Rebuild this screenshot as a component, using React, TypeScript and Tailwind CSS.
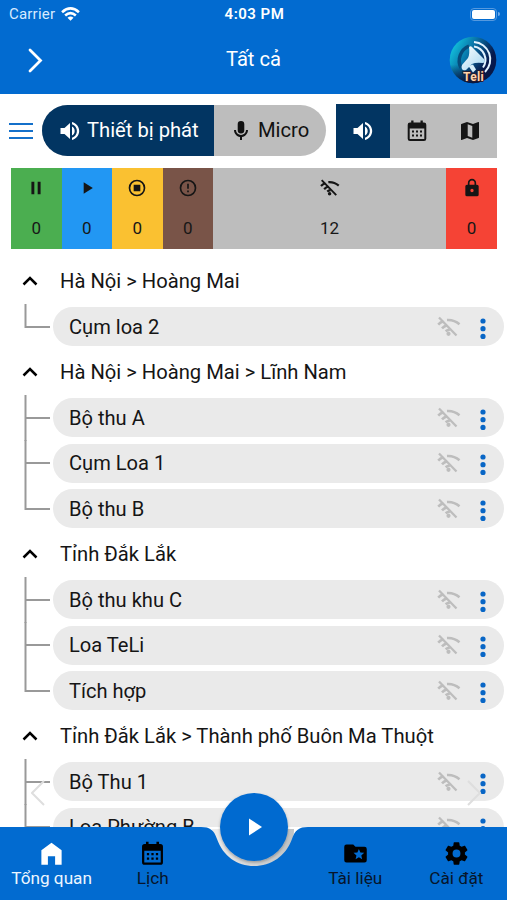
import type { ReactNode } from 'react'

type IconName = keyof typeof paths

const paths = {
  volume:
    'M2.5 9v6h4l5.5 5V4L6.5 9zm14.2 3c0-2-1.1-3.7-2.7-4.5v9c1.6-.8 2.7-2.5 2.7-4.5zM14 3v2.3c2.9.9 4.9 3.6 4.9 6.7s-2 5.8-4.9 6.7V21c4.1-1 7.2-4.6 7.2-9S18.1 4 14 3z',
  mic: 'M12 2a3.3 3.3 0 0 1 3.3 3.3v6a3.3 3.3 0 0 1-6.6 0v-6A3.3 3.3 0 0 1 12 2m7 9c0 3.53-2.61 6.44-6 6.93V21h-2v-3.07c-3.39-.49-6-3.4-6-6.93h2a5 5 0 0 0 10 0h2z',
  calendar:
    'M5 3.5h1.2v-2h2.3v2h7v-2h2.3v2H19a2.3 2.3 0 0 1 2.3 2.3v13.9A2.3 2.3 0 0 1 19 22H5a2.3 2.3 0 0 1-2.3-2.3V5.8A2.3 2.3 0 0 1 5 3.5M4.7 9.5V20h14.6V9.5zM7 11.5h2v2H7zm4 0h2v2h-2zm4 0h2v2h-2zm-8 4h2v2H7zm4 0h2v2h-2zm4 0h2v2h-2z',
  map: 'M20.5 3l-.16.03L15 5.1 9 3 3.36 4.9c-.21.07-.36.25-.36.48V20.5a.5.5 0 0 0 .5.5l.16-.03L9 18.9l6 2.1 5.64-1.9c.21-.07.36-.25.36-.48V3.5a.5.5 0 0 0-.5-.5zM14.3 18.7l-4.6-1.6V5.3l4.6 1.6z',
  pause: 'M6.5 4.5H10v15H6.5zM14 4.5h3.5v15H14z',
  play: 'M8 5v14l11-7z',
  stop: 'M12 2a10 10 0 1 0 0 20 10 10 0 0 0 0-20zm0 2a8 8 0 1 1 0 16 8 8 0 0 1 0-16zM8 8v8h8V8z',
  alert:
    'M11 15h2v2h-2zm0-8h2v6h-2zm1-5a10 10 0 1 0 0 20 10 10 0 0 0 0-20zm0 18a8 8 0 1 1 0-16 8 8 0 0 1 0 16z',
  lock: 'M12 17a2 2 0 0 0 0-4 2 2 0 0 0 0 4m6-9a2 2 0 0 1 2 2v10a2 2 0 0 1-2 2H6a2 2 0 0 1-2-2V10a2 2 0 0 1 2-2h1V6a5 5 0 0 1 10 0v2h1m-6-5a3 3 0 0 0-3 3v2h6V6a3 3 0 0 0-3-3z',
  home: 'M12 2.5 3 9v13h5.8v-7.5h6.4V22H21V9z',
  folder:
    'M20 6h-8l-2-2H4a2 2 0 0 0-2 2v12a2 2 0 0 0 2 2h16a2 2 0 0 0 2-2V8a2 2 0 0 0-2-2zm-2.06 11L15 15.28 12.06 17l.78-3.33-2.59-2.24 3.41-.29L15 8l1.34 3.14 3.41.29-2.59 2.24.78 3.33z',
  cog: 'M12 15.5A3.5 3.5 0 0 1 8.5 12 3.5 3.5 0 0 1 12 8.5a3.5 3.5 0 0 1 3.5 3.5 3.5 3.5 0 0 1-3.5 3.5m7.43-2.53c.04-.32.07-.64.07-.97s-.03-.66-.07-1l2.11-1.63c.19-.15.24-.42.12-.64l-2-3.46c-.12-.22-.39-.31-.61-.22l-2.49 1c-.52-.39-1.06-.73-1.69-.98l-.37-2.65A.506.506 0 0 0 14 2h-4c-.25 0-.46.18-.5.42l-.37 2.65c-.63.25-1.17.59-1.69.98l-2.49-1c-.22-.09-.49 0-.61.22l-2 3.46c-.13.22-.07.49.12.64L4.57 11c-.04.34-.07.67-.07 1s.03.65.07.97l-2.11 1.66c-.19.15-.25.42-.12.64l2 3.46c.12.22.39.3.61.22l2.49-1.01c.52.4 1.06.74 1.69.99l.37 2.65c.04.24.25.42.5.42h4c.25 0 .46-.18.5-.42l.37-2.65c.63-.26 1.17-.59 1.69-.99l2.49 1.01c.22.08.49 0 .61-.22l2-3.46c.12-.22.07-.49-.12-.64z',
}

function Icon({ name, className }: { name: IconName; className: string }) {
  return (
    <svg viewBox="0 0 24 24" fill="currentColor" className={className}>
      <path d={paths[name]} fillRule="evenodd" />
    </svg>
  )
}

function WifiOff({ className }: { className: string }) {
  return (
    <svg viewBox="0 0 24 24" fill="none" stroke="currentColor" strokeWidth="2.3" className={className}>
      <path d="M2 2.5l17.5 18" />
      <path d="M1.2 9.6Q3.2 7.4 6.4 6.2M10 5q7-.5 12.5 4.2M5 13.4q1.8-2 5-3.2M8.6 16.2q1.7-1.3 4.2-1.6" strokeWidth="2.6" />
      <circle cx="11.5" cy="18.8" r="2.1" fill="currentColor" stroke="none" />
    </svg>
  )
}

function Logo() {
  return (
    <svg viewBox="0 0 48 48" className="size-12">
      <defs>
        <linearGradient id="disc" x1="0" y1="0.15" x2="1" y2="0.7">
          <stop offset="0" stopColor="#14d0e6" />
          <stop offset="0.4" stopColor="#0873a8" />
          <stop offset="0.8" stopColor="#07184c" />
        </linearGradient>
        <linearGradient id="base" x1="0" y1="0" x2="0" y2="1">
          <stop offset="0.6" stopColor="#08163d" stopOpacity="0" />
          <stop offset="1" stopColor="#08163d" />
        </linearGradient>
        <linearGradient id="horn" x1="0" y1="0" x2="1" y2="1">
          <stop offset="0" stopColor="#fff" />
          <stop offset="1" stopColor="#9ed4f0" />
        </linearGradient>
      </defs>
      <circle cx="24" cy="24" r="23.3" fill="url(#disc)" />
      <circle cx="24" cy="24" r="23.3" fill="url(#base)" />
      <path d="M12 32a16 16 0 0 1 8-22" fill="none" stroke="#064c7c" strokeWidth="3.5" />
      <path d="M25 6a17.5 17.5 0 0 1 11 30M25 10.5a13.5 13.5 0 0 1 9 21" fill="none" stroke="#e3f3ff" strokeWidth="2" />
      <path d="M20 11q2-2 4 1l11 11q2 3-1 4-7-1-11 1l-6 6q-3 1-4-1t0-4l6-7q2-4 1-11z" fill="url(#horn)" />
      <path d="m19.5 30 4.5-1.5 3 5-3 3z" fill="#d6edf8" />
      <text x="24.5" y="45" textAnchor="middle" fontFamily="Roboto, sans-serif" fontSize="12" fontWeight="700" letterSpacing=".3" fill="#ffd4ab" stroke="#311a27" strokeWidth="1.4" paintOrder="stroke">Teli</text>
    </svg>
  )
}

function Header() {
  return (
    <header className="h-[93.5px] shrink-0 bg-[#026bd0] text-white">
      <div className="grid h-7 grid-cols-3 items-center pl-[9px] pr-[7px] text-[15px]">
        <div className="flex items-center gap-1.5 text-[#d7eaff]">
          <span className="tracking-[.2px]">Carrier</span>
          <svg viewBox="0 0 20 16" className="h-[15px] w-[19px]" fill="none" stroke="white" strokeWidth="2.8">
            <path d="M1 5.5q9-8 18 0M4.3 9q5.7-5 11.4 0" />
            <path d="m6.8 11.5 3.2 3.2 3.2-3.2q-3.2-2.5-6.4 0z" fill="white" stroke="none" />
          </svg>
        </div>
        <span className="text-center font-semibold tracking-[.5px]">4:03 PM</span>
        <div className="flex items-center justify-end gap-px">
          <div className="h-[13px] w-[27px] rounded-[4px] border border-[#5599df] p-px"><div className="h-full rounded-[2px] bg-white" /></div>
          <div className="h-1 w-0.5 rounded-r bg-[#71aceb]" />
        </div>
      </div>
      <div className="grid h-16 grid-cols-[1fr_auto_1fr] items-center px-[10px]">
        <svg viewBox="0 0 15 25" className="ml-[18px] h-[25px] w-[15px]" fill="none" stroke="white" strokeWidth="2.8" strokeLinecap="round"><path d="m2 2 10.5 10.5L2 23" /></svg>
        <h1 className="pb-px text-center text-[20.2px]">Tất cả</h1>
        <div className="flex justify-end"><Logo /></div>
      </div>
    </header>
  )
}

function Toolbar() {
  return (
    <div className="flex h-[54px] items-center pl-[9px] pr-[10px]">
      <div className="flex w-6 flex-col gap-[5px]">
        <span className="h-[2px] bg-[#1470ca]" />
        <span className="h-[2px] bg-[#1470ca]" />
        <span className="h-[2px] bg-[#1470ca]" />
      </div>
      <div className="ml-[9px] flex h-[51px] w-[284px] overflow-hidden rounded-full bg-[#bdbdbd] text-[20.2px]">
        <button className="flex w-[172px] items-center gap-[5px] whitespace-nowrap bg-[#023562] pl-4 text-white"><Icon name="volume" className="size-6" />Thiết bị phát</button>
        <button className="flex flex-1 items-center gap-[5px] pl-[15px] text-[#111]"><Icon name="mic" className="size-6" />Micro</button>
      </div>
      <div className="ml-auto flex h-[54px] w-[161px] bg-[#bdbdbd]">
        <button className="flex w-[54px] items-center justify-center bg-[#023562] text-white"><Icon name="volume" className="size-6" /></button>
        <button className="flex flex-1 items-center justify-center"><Icon name="calendar" className="size-6" /></button>
        <button className="flex flex-1 items-center justify-center"><Icon name="map" className="size-6" /></button>
      </div>
    </div>
  )
}

function Stat({ icon, count, color }: { icon: ReactNode; count: number; color: string }) {
  return (
    <div className={`flex flex-col items-center pt-[10.5px] ${color}`}>
      {icon}
      <span className="mt-[19.5px] text-[17px] leading-[20px] text-[#171717]">{count}</span>
    </div>
  )
}

function Stats() {
  return (
    <div className="ml-[11px] mr-[10px] mt-[10px] grid h-[81px] shrink-0 grid-cols-[50.5px_50.5px_50.5px_50.5px_1fr_51px]">
      <Stat color="bg-[#4bae50]" count={0} icon={<Icon name="pause" className="size-5" />} />
      <Stat color="bg-[#2297f3]" count={0} icon={<Icon name="play" className="size-5" />} />
      <Stat color="bg-[#fac131]" count={0} icon={<Icon name="stop" className="size-5" />} />
      <Stat color="bg-[#795448]" count={0} icon={<Icon name="alert" className="size-5" />} />
      <Stat color="bg-[#bdbdbd]" count={12} icon={<WifiOff className="size-5" />} />
      <Stat color="bg-[#f54335]" count={0} icon={<Icon name="lock" className="size-5" />} />
    </div>
  )
}

const groups = [
  { name: 'Hà Nội > Hoàng Mai', items: ['Cụm loa 2'] },
  { name: 'Hà Nội > Hoàng Mai > Lĩnh Nam', items: ['Bộ thu A', 'Cụm Loa 1', 'Bộ thu B'] },
  { name: 'Tỉnh Đắk Lắk', items: ['Bộ thu khu C', 'Loa TeLi', 'Tích hợp'] },
  { name: 'Tỉnh Đắk Lắk > Thành phố Buôn Ma Thuột', items: ['Bộ Thu 1', 'Loa Phường B', ''] },
]

function Device({ name, last }: { name: string; last: boolean }) {
  return (
    <div className="flex h-[45.5px] pl-6 pr-[3px]">
      <svg viewBox="0 0 29 45.5" className="h-[45.5px] w-[29px] shrink-0 overflow-visible" fill="none" stroke="#999" strokeWidth="2">
        <path d={last ? 'M1.5 0v23H26' : 'M1.5 0v46M1.5 23H26'} />
      </svg>
      <div className="mt-[3.8px] flex h-[39px] min-w-0 flex-1 items-center rounded-full bg-[#eaeaea] pl-4 pr-[18px] text-[20.1px]">
        <span className="flex-1">{name}</span>
        <WifiOff className="size-6 text-[#bdbdbd]" />
        <svg viewBox="0 0 6 22" className="ml-[19px] mt-1 h-[22px] w-[6px] fill-[#0866c6]">
          <circle cx="3" cy="3" r="2.6" /><circle cx="3" cy="10.7" r="2.6" /><circle cx="3" cy="18.4" r="2.6" />
        </svg>
      </div>
    </div>
  )
}

function DeviceList() {
  return (
    <main className="mt-[9.5px] min-h-0 flex-1 overflow-hidden">
      {groups.map((group) => (
        <section key={group.name}>
          <h2 className="flex h-[45.5px] items-center pl-[22px] text-[20.2px]">
            <svg viewBox="0 0 16 10" className="mr-[22px] h-[10px] w-4" fill="none" stroke="black" strokeWidth="2.5"><path d="m1.5 8.5 6.5-6.5 6.5 6.5" /></svg>
            {group.name}
          </h2>
          {group.items.map((item, i) => <Device key={item} name={item} last={i === group.items.length - 1} />)}
        </section>
      ))}
    </main>
  )
}

function Tab({ icon, label, active }: { icon: IconName; label: string; active?: boolean }) {
  return (
    <button className={`flex flex-col items-center pt-[13px] ${active ? 'text-[#edf6ff]' : 'text-[#07152a]'}`}>
      <Icon name={icon} className={active ? 'size-[27px] text-white' : 'size-[27px] text-black'} />
      <span className="text-[17.2px] leading-[22px]">{label}</span>
    </button>
  )
}

function BottomNav() {
  return (
    <nav className="relative h-[73px] shrink-0">
      <svg viewBox="0 0 507 107" className="absolute bottom-0 left-0 h-[107px] w-full">
        <defs>
          <linearGradient id="rim" x1="0" x2="1"><stop stopColor="#ededed" /><stop offset=".5" stopColor="#d5d7d8" /><stop offset="1" stopColor="#bfc3c5" /></linearGradient>
          <filter id="lift" x="-20%" y="-20%" width="140%" height="150%"><feDropShadow dx="0" dy="1.5" stdDeviation="1.5" floodOpacity=".3" /></filter>
        </defs>
        <path d="M212 36c2 26 20 38 42 38s40-12 40-38z" fill="url(#rim)" />
        <path d="M0 34h201c9 0 13 3 16 12 6 17 20 27 37 27s32-10 38-27c3-9 7-12 16-12h199v73H0z" fill="#026bd0" />
        <circle cx="254" cy="34" r="34" fill="#026bd0" filter="url(#lift)" />
        <path d="M249 25.5v17L262 34z" fill="white" />
      </svg>
      <div className="relative grid h-full grid-cols-5 pl-px">
        <Tab icon="home" label="Tổng quan" active />
        <Tab icon="calendar" label="Lịch" />
        <span />
        <Tab icon="folder" label="Tài liệu" />
        <Tab icon="cog" label="Cài đặt" />
      </div>
    </nav>
  )
}

export default function App() {
  return (
    <div className="relative flex h-[900px] w-[507px] flex-col overflow-hidden bg-white font-[Roboto,sans-serif] text-[#151515]">
      <Header />
      <div className="mt-[10px]"><Toolbar /></div>
      <Stats />
      <DeviceList />
      <svg viewBox="0 0 14 26" className="absolute left-[31px] top-[780px] h-[26px] w-[14px]" fill="none" stroke="#dedede" strokeWidth="2"><path d="M13 1 1 13l12 12" /></svg>
      <svg viewBox="0 0 14 26" className="absolute left-[467px] top-[780px] h-[26px] w-[14px]" fill="none" stroke="#dedede" strokeWidth="2"><path d="m1 1 12 12L1 25" /></svg>
      <BottomNav />
    </div>
  )
}
